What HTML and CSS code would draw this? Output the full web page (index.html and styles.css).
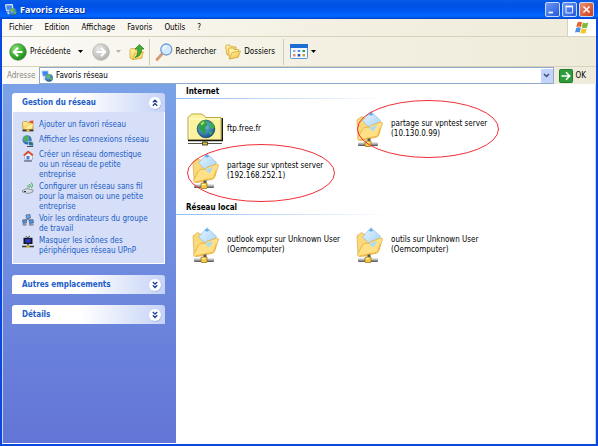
FILE: index.html
```html
<!DOCTYPE html>
<html lang="fr">
<head>
  <meta charset="UTF-8" />
  <meta name="viewport" content="width=device-width, initial-scale=1.0" />
  <title>Favoris réseau</title>
  <link rel="stylesheet" href="styles.css">
</head>
<body>

<!-- Shared icons -->
<svg class="defs" aria-hidden="true">
  <defs>
    <linearGradient id="gFolder" x1="0" y1="0" x2="1" y2="1">
      <stop offset="0" stop-color="#fff3a8" />
      <stop offset="1" stop-color="#f2bd3c" />
    </linearGradient>
    <linearGradient id="gMetal" x1="0" y1="0" x2="0" y2="1">
      <stop offset="0" stop-color="#f4f4f4" />
      <stop offset="0.5" stop-color="#a8acb0" />
      <stop offset="1" stop-color="#44484c" />
    </linearGradient>
    <linearGradient id="gPaper" x1="0" y1="0" x2="1" y2="1">
      <stop offset="0" stop-color="#e6f6ff" />
      <stop offset="1" stop-color="#a4d0f6" />
    </linearGradient>
    <radialGradient id="gGreen" cx="0.35" cy="0.3" r="0.8">
      <stop offset="0" stop-color="#8be07c" />
      <stop offset="0.6" stop-color="#38a92e" />
      <stop offset="1" stop-color="#1c7a1c" />
    </radialGradient>
    <radialGradient id="gGrey" cx="0.35" cy="0.3" r="0.8">
      <stop offset="0" stop-color="#e8e8e6" />
      <stop offset="1" stop-color="#adadab" />
    </radialGradient>
    <radialGradient id="gSea" cx="0.4" cy="0.35" r="0.7">
      <stop offset="0" stop-color="#7cc4f8" />
      <stop offset="1" stop-color="#12508c" />
    </radialGradient>
  </defs>

  <symbol id="i-network" viewBox="0 0 12 12">
    <path d="M0.5 0.800 L7.500 0.5 L8 6.500 L1.5 7z" fill="#8ab4ea" stroke="#dfe9f8" />
    <path d="M1.5 1.800 L6.600 1.5 L6.900 5.300 L2 5.7z" fill="#3f86ea" />
    <path d="M2 8l3-.5v2.500l-2 .5z" fill="#cfd6de" />
    <circle cx="8" cy="7.800" r="3.900" fill="url(#gSea)" />
    <path d="M5.600 5.500q2-2 4-1l-.6 2.400-1.800.6-1.800-.4zM9 8.200l2.200 -.8.4 1.200-1.800 2.200z" fill="#69b94c" />
  </symbol>

  <symbol id="i-netfolder" viewBox="0 0 28 36">
    <path d="M2 10 Q2 8 4 7.500 L6.500 5.500 L9 7 L20 10 V25 L8 29 L3 27z" fill="#fbd978" stroke="#dca848" stroke-width="0.700" />
    <path d="M16 0.700 L25.500 9.500 L17 19 L7.500 10z" fill="url(#gPaper)" stroke="#82b0dc" stroke-width="0.600" />
    <path d="M16 1.300 l2.300 2.200 -2.300 1.200 -2.300-1.200z" fill="#5cb0ee" />
    <path d="M2.500 27.500 L7.500 18 Q8.500 16.500 10.500 16.300 L14 16.300 L16 14.500 L25.500 11 Q28 10.800 27.300 13 L23.500 24.500 Q23 26 21 26.300 L6 29.500 Q2.500 30 2.500 27.500z" fill="#ffe084" stroke="#dba53c" stroke-width="0.700" />
    <path d="M4 28.500 L22 24.800 L25 16 Q26 24 21 26 L6 29.200z" fill="#f2b840" />
    <path d="M14 17 L22.500 13.700 L18.500 20.500z" fill="#a9dcf4" />
    <path d="M12.500 27.500h3v4h-3z" fill="#50565c" />
    <rect x="3" y="31" width="20" height="4" rx="1" fill="url(#gMetal)" />
    <rect x="10" y="30" width="6" height="5.500" rx="0.600" fill="#f9cb3e" stroke="#8c6a14" stroke-width="0.700" />
    <path d="M11 31.500h3" stroke="#fff6c0" />
  </symbol>

  <symbol id="i-ftp" viewBox="0 0 36 36">
    <path d="M1 29V6.500L4.500 3H15L19 6.500H34V29z" fill="#fbf2a0" stroke="#b9a93c" />
    <path d="M2.500 28V8H33" fill="none" stroke="#fffcd6" />
    <path d="M1 29.500H35.300V7" fill="none" stroke="#15150c" stroke-width="1.400" />
    <circle cx="19" cy="18" r="8.800" fill="url(#gSea)" stroke="#123c58" stroke-width="0.700" />
    <path d="M12 13q3-4.500 8-4.200l-1 3 2 1.500-3 3.700 1.500 2.500-2.500 4.500-2-3.500-3-2.500z" fill="#2fa046" />
    <path d="M22 11l4 1 1.500 4-2.500 2.500-2.500-2 .5-2.500zM22 21l4-.5-2.500 4z" fill="#3cae4c" />
    <path d="M13.500 12.500l3-2.500 1 2-3 2.500z" fill="#b9dc58" />
    <path d="M18 29.500v2M1 32.500h34" stroke="#55554c" />
    <rect x="15.500" y="31" width="5" height="3" fill="#d8c22e" stroke="#33332a" stroke-width="0.800" />
  </symbol>

  <symbol id="i-down" viewBox="0 0 5 3"><path d="M0 0h5L2.500 3z" fill="currentColor" /></symbol>

  <symbol id="i-expand" viewBox="0 0 14 14">
    <circle cx="7.500" cy="7.700" r="6" fill="#a7b4dc" />
    <circle cx="7" cy="7" r="6" fill="#fff" />
    <path d="M4.800 4l2.200 2.200L9.200 4M4.800 7.300L7 9.500l2.200-2.200" fill="none" stroke="#1b3c92" stroke-width="1.300" />
  </symbol>

  <symbol id="i-collapse" viewBox="0 0 14 14">
    <circle cx="7.500" cy="7.700" r="6" fill="#a7b4dc" />
    <circle cx="7" cy="7" r="6" fill="#fff" />
    <path d="M4.800 6.400L7 4.200l2.200 2.200M4.800 9.700L7 7.500l2.200 2.200" fill="none" stroke="#1b3c92" stroke-width="1.300" />
  </symbol>
</svg>

<div class="window">
  <header class="titlebar">
    <svg class="icon12"><use href="#i-network" /></svg>
    <h1>Favoris réseau</h1>
    <div class="window-buttons">
      <button type="button" aria-label="Réduire"><svg viewBox="0 0 15 15"><path d="M3 11h5" stroke="#fff" stroke-width="2" /></svg></button>
      <button type="button" aria-label="Agrandir"><svg viewBox="0 0 15 15"><path d="M3.500 4v7.500h7.500V4" fill="none" stroke="#fff" /><path d="M3 4h8.500" stroke="#fff" stroke-width="2" /></svg></button>
      <button type="button" class="close" aria-label="Fermer"><svg viewBox="0 0 15 15"><path d="M4 4l7 7M11 4l-7 7" stroke="#fff" stroke-width="1.700" /></svg></button>
    </div>
  </header>

  <div class="menubar">
    <nav class="menus">
      <button type="button">Fichier</button>
      <button type="button">Edition</button>
      <button type="button">Affichage</button>
      <button type="button">Favoris</button>
      <button type="button">Outils</button>
      <button type="button">?</button>
    </nav>
    <div class="flag">
      <svg viewBox="0 0 14 13">
        <path d="M2.500 1.500Q4.500 0 7 1.200L6 6Q3.500 4.800 1.300 6z" fill="#e8622c" />
        <path d="M7.800 1.600Q10.500 3 13.300 1.600L12 6.500Q9.500 7.700 6.800 6.400z" fill="#7cb83c" />
        <path d="M1.200 6.900Q3.500 5.700 5.800 6.900L4.700 11.500Q2.500 10.300 0 11.500z" fill="#4b8fe0" />
        <path d="M6.600 7.300Q9.200 8.600 11.800 7.400L10.600 12Q8 13.200 5.500 12z" fill="#f6c52c" />
      </svg>
    </div>
  </div>

  <div class="toolbar">
    <button type="button" class="back">
      <svg class="icon18" viewBox="0 0 18 18"><circle cx="9" cy="9" r="8.300" fill="url(#gGreen)" stroke="#2d7a2b" stroke-width="0.600" /><path d="M13.500 9H5.500M9 4.800L4.800 9 9 13.200" fill="none" stroke="#fff" stroke-width="2" /></svg>
      <span>Précédente</span>
      <svg class="arrow"><use href="#i-down" /></svg>
    </button>
    <button type="button" class="forward" aria-label="Suivante">
      <svg class="icon18" viewBox="0 0 18 18"><circle cx="9" cy="9" r="8.300" fill="url(#gGrey)" stroke="#a6a6a4" stroke-width="0.600" /><path d="M4.500 9h8M9 4.800L13.200 9 9 13.200" fill="none" stroke="#fff" stroke-width="2" /></svg>
      <svg class="arrow"><use href="#i-down" /></svg>
    </button>
    <button type="button" class="up" aria-label="Dossier parent">
      <svg class="icon16" viewBox="0 0 16 16">
        <path d="M1 6l1-1.500h3.500l1 1.500L13 7v7l-9 1.500L1 14z" fill="url(#gFolder)" stroke="#d2a02c" stroke-width="0.700" />
        <path d="M4 15.300L5.500 9.500l9-1.500-2 6z" fill="#fbe07c" stroke="#d2a02c" stroke-width="0.600" />
        <path d="M6 13.500Q9.500 11 8.700 5H6L10.500 0.500 15 5h-2.600Q13 12 6 13.500z" fill="#42b035" stroke="#20781c" stroke-width="0.700" />
      </svg>
    </button>
    <button type="button" class="search">
      <svg class="icon18" viewBox="0 0 18 18">
        <path d="M7.500 10.500L2 16.500" stroke="#d79a70" stroke-width="2.800" stroke-linecap="round" />
        <circle cx="11.300" cy="6.500" r="5.500" fill="#d5ebfb" stroke="#6f9fd8" stroke-width="1.300" />
        <path d="M8 6.500Q8.500 3.500 11.500 3.200" fill="none" stroke="#fff" stroke-width="1.300" />
      </svg>
      <span>Rechercher</span>
    </button>
    <button type="button" class="folders">
      <svg class="icon16" viewBox="0 0 16 16">
        <path d="M0.500 2.500L1.500 1H5l1 1.500 5 .5v8H2z" fill="url(#gFolder)" stroke="#d0a030" stroke-width="0.700" />
        <path d="M3.500 5.500L4.500 4H8l1 1.500h4.500v7L4.500 15z" fill="#fff0a0" stroke="#d0a030" stroke-width="0.700" />
        <path d="M4.500 15L7 8.500l8.500-1.500-2.300 6.200z" fill="url(#gFolder)" stroke="#d0a030" stroke-width="0.700" />
      </svg>
      <span>Dossiers</span>
    </button>
    <button type="button" class="views" aria-label="Affichage">
      <svg class="views-icon" viewBox="0 0 18 15">
        <rect x="0.500" y="0.500" width="17" height="14" rx="1" fill="#f6faff" stroke="#5596dc" />
        <path d="M0 0h18v4H0z" fill="#1d6fd4" />
        <path d="M3 6h2.500v2H3z" fill="#a9a2d8" /><path d="M7.700 6h2.500v2H7.700z" fill="#3f8fe4" /><path d="M12.500 6H15v2h-2.500z" fill="#2f9a3a" />
        <path d="M3 10h2.500v2.500H3z" fill="#f08a5c" /><path d="M7.700 10h2.500v2.500H7.700z" fill="#2450a8" /><path d="M12.500 10H15v2.500h-2.500z" fill="#d8a020" />
      </svg>
      <svg class="arrow"><use href="#i-down" /></svg>
    </button>
  </div>

  <form class="addressbar">
    <label for="address">Adresse</label>
    <div class="combo">
      <svg class="icon12"><use href="#i-network" /></svg>
      <input type="text" id="address" value="Favoris réseau" />
      <button type="button" aria-label="Liste des adresses"><svg viewBox="0 0 7 5"><path d="M1 1l2.500 2.500L6 1" fill="none" stroke="#38507c" stroke-width="1.500" /></svg></button>
    </div>
    <button type="button" class="go">
      <svg viewBox="0 0 14 14"><rect x="0.500" y="0.500" width="13" height="13" rx="1" fill="#2f9c3c" stroke="#207a2c" /><path d="M2.500 7h8M7 3.300L10.700 7 7 10.700" fill="none" stroke="#fff" stroke-width="1.600" /></svg>
      <span>OK</span>
    </button>
  </form>

  <div class="content">
    <aside class="sidebar">
      <section class="panel">
        <h2>Gestion du réseau <button type="button" aria-label="Replier"><svg><use href="#i-collapse" /></svg></button></h2>
        <ul class="tasks">
          <li>
            <svg viewBox="0 0 12 12"><path d="M0.500 2.500l1-1H5l1 1h5v7H1z" fill="url(#gFolder)" stroke="#b98a20" stroke-width="0.700" /><path d="M7 1l4.500-.5L11 4 9 3z" fill="#e8502c" /><path d="M6 6l5-2.500-1 5-7 1z" fill="#fff0a0" /><path d="M0.500 10.500h11" stroke="#36383c" stroke-width="1.800" /><path d="M4.500 10.500h3" stroke="#f4c030" stroke-width="2.200" /></svg>
            <a href="#">Ajouter un favori réseau</a>
          </li>
          <li>
            <svg viewBox="0 0 12 12"><circle cx="5" cy="4.800" r="4.600" fill="url(#gSea)" /><path d="M1.500 3Q4-.5 7 1L5.500 3.500 6 5.500 4 7z" fill="#4fb04a" /><path d="M6 6l5 1 .8 4-5-.5z" fill="#2a6f8c" stroke="#c8dce6" stroke-width="0.700" /><path d="M5 11.500h6" stroke="#39525c" /></svg>
            <a href="#">Afficher les connexions réseau</a>
          </li>
          <li>
            <svg viewBox="0 0 12 12"><path d="M2.500 4.500L7 2l3.500 3v4.500L6 11 2.500 9z" fill="#eef2fa" stroke="#8b98b8" stroke-width="0.600" /><path d="M1 5L6 0.500 11.500 4.500 10 6 6.500 3 2.500 6z" fill="#d84c2c" /><path d="M4.500 6h3v3.500h-3z" fill="#4b7fcc" /><path d="M2 11h8" stroke="#5a6170" stroke-width="1.200" /></svg>
            <a href="#">Créer un réseau domestique ou un réseau de petite entreprise</a>
          </li>
          <li>
            <svg viewBox="0 0 12 12"><path d="M0.500 8.500L5 6.500l6 1.500v1.800L6 11.500.5 10z" fill="#d9dce2" stroke="#6f7480" stroke-width="0.700" /><path d="M6 5.500V3M7.500 5.500q1.500-1.500 0-3.500M9.500 6q2-2.500 0-5.500" fill="none" stroke="#3fae3a" /><path d="M2 9.500h2" stroke="#333" /></svg>
            <a href="#">Configurer un réseau sans fil pour la maison ou une petite entreprise</a>
          </li>
          <li>
            <svg viewBox="0 0 12 12"><path d="M4 1l4-.5.5 3.500-4 .5z" fill="#66a9ec" stroke="#4e5c72" stroke-width="0.700" /><path d="M6 4.500L3 8M6 4.500L9 8" stroke="#4e5c72" /><path d="M0.500 6l3.500-.5.5 3.500L1 9.500zM7 6l4-.5.5 3.500-4 .5z" fill="#4f90e0" stroke="#4e5c72" stroke-width="0.700" /><path d="M0.500 10.800h4M7 10.800h4.500" stroke="#6f7788" stroke-width="1.200" /></svg>
            <a href="#">Voir les ordinateurs du groupe de travail</a>
          </li>
          <li>
            <svg viewBox="0 0 12 12"><path d="M3.500 0l2 1.700L8 0" fill="none" stroke="#222" stroke-width="0.800" /><rect x="1.500" y="1.800" width="9" height="6.200" fill="#16171c" /><rect x="3.300" y="3" width="5.400" height="3.800" fill="#2b35c8" /><path d="M6 8v2M0 10.500h12" stroke="#3a3a30" stroke-width="1.300" /><path d="M4.500 9.500h3v2h-3z" fill="#e8c82c" /></svg>
            <a href="#">Masquer les icônes des périphériques réseau UPnP</a>
          </li>
        </ul>
      </section>
      <section class="panel">
        <h2>Autres emplacements <button type="button" aria-label="Déplier"><svg><use href="#i-expand" /></svg></button></h2>
      </section>
      <section class="panel">
        <h2>Détails <button type="button" aria-label="Déplier"><svg><use href="#i-expand" /></svg></button></h2>
      </section>
    </aside>

    <main class="files">
      <h2>Internet</h2>
      <ul class="tiles">
        <li><svg class="ftp"><use href="#i-ftp" /></svg><span>ftp.free.fr</span></li>
        <li>
          <svg><use href="#i-netfolder" /></svg><span>partage sur vpntest server<br>(10.130.0.99)</span>
          <svg class="ring" viewBox="0 0 142 58" preserveAspectRatio="none"><ellipse cx="71" cy="29" rx="70.500" ry="28.500" /></svg>
        </li>
        <li>
          <svg><use href="#i-netfolder" /></svg><span>partage sur vpntest server<br>(192.168.252.1)</span>
          <svg class="ring large" viewBox="0 0 148 58" preserveAspectRatio="none"><ellipse cx="74" cy="29" rx="73.500" ry="28.500" /></svg>
        </li>
      </ul>
      <h2>Réseau local</h2>
      <ul class="tiles">
        <li><svg><use href="#i-netfolder" /></svg><span>outlook expr sur Unknown User<br>(Oemcomputer)</span></li>
        <li><svg><use href="#i-netfolder" /></svg><span>outils sur Unknown User<br>(Oemcomputer)</span></li>
      </ul>
    </main>
  </div>
</div>

</body>
</html>
```

FILE: styles.css
```css
* {
  box-sizing: border-box;
}
body {
  margin: 0;
  font-family: "DejaVu Sans Condensed", Tahoma, "DejaVu Sans", sans-serif;
  font-size: 8px;
  line-height: 10px;
  color: #000;
}
h1, h2, ul {
  margin: 0;
  padding: 0;
}
ul {
  list-style: none;
}
svg {
  display: block;
  flex: none;
}
button, input {
  font: inherit;
  color: inherit;
  margin: 0;
  padding: 0;
  border: none;
  background: none;
}
button {
  display: flex;
  align-items: center;
}
.defs {
  position: absolute;
  width: 0;
  height: 0;
}
.icon12 {
  width: 12px;
  height: 12px;
}
.icon16 {
  width: 16px;
  height: 16px;
}
.icon18 {
  width: 18px;
  height: 18px;
}
.arrow {
  width: 5px;
  height: 3px;
}

.window {
  display: flex;
  flex-direction: column;
  min-height: 100vh;
  padding: 0 2px 2px;
  background: #0a48e0;
}

/* Title bar */
.titlebar {
  display: flex;
  align-items: center;
  gap: 3px;
  height: 19px;
  margin: 0 -2px;
  padding: 0 4px 0 5px;
  background: linear-gradient(#0a5ae8 0%, #0050e6 30%, #0058f4 60%, #0068ff 85%, #0040c8 100%);
}
.titlebar h1 {
  flex: 1;
  font-family: "Open Sans", "Trebuchet MS", sans-serif;
  font-size: 9px;
  font-weight: bold;
  color: #fff;
  text-shadow: 1px 1px #0a2f96;
}
.window-buttons {
  display: flex;
  gap: 2px;
}
.window-buttons button {
  width: 15px;
  height: 15px;
  border: 1px solid #c8d8f8;
  border-radius: 2px;
  background: linear-gradient(135deg, #6f98f4, #2458dc);
}
.window-buttons .close {
  background: linear-gradient(135deg, #f09070, #cc3c18);
}

/* Menus and toolbars */
.menubar, .toolbar, .addressbar {
  background: linear-gradient(90deg, #fbfaf6, #f4f1e4 50%, #eeebda);
}
.menubar {
  display: flex;
  height: 18px;
  border-bottom: 1px solid #d8d2bd;
}
.menus {
  display: flex;
  flex: 1;
  gap: 12px;
  padding-left: 7px;
}
.flag {
  display: flex;
  align-items: center;
  justify-content: center;
  width: 29px;
  background: #fff;
  border-left: 1px solid #d8d2bd;
}
.flag svg {
  width: 14px;
  height: 13px;
}
.toolbar {
  display: flex;
  align-items: center;
  height: 30px;
  padding-left: 7px;
  border-bottom: 1px solid #d8d2bd;
}
.toolbar button {
  gap: 3px;
}
.toolbar .back .arrow {
  margin-left: 4px;
}
.toolbar .forward {
  gap: 6px;
  margin-left: 9px;
  color: #b4b2a8;
}
.toolbar .up {
  height: 26px;
  margin-left: 8px;
  padding-right: 4px;
  border-right: 1px solid #cfcab6;
}
.toolbar .search {
  margin-left: 5px;
}
.toolbar .folders {
  height: 26px;
  margin-left: 9px;
  padding-right: 8px;
  border-right: 1px solid #cfcab6;
}
.toolbar .views {
  margin-left: 6px;
}
.views-icon {
  width: 18px;
  height: 15px;
}
.addressbar {
  display: flex;
  align-items: center;
  height: 17px;
  padding: 0 10px 0 5px;
}
.addressbar label {
  width: 32px;
  color: #8a887c;
}
.combo {
  display: flex;
  flex: 1;
  align-items: center;
  gap: 3px;
  height: 17px;
  padding-left: 1px;
  border: 1px solid #8fa9c8;
  background: #fff;
}
.combo input {
  flex: 1;
  min-width: 0;
  outline: none;
}
.combo button {
  justify-content: center;
  width: 12px;
  height: 14px;
  border-radius: 1px;
  background: #c4d3fa;
}
.combo button svg {
  width: 7px;
  height: 5px;
}
.go {
  gap: 3px;
  margin-left: 5px;
}
.go svg {
  width: 14px;
  height: 14px;
}

/* Content */
.content {
  display: flex;
  flex: 1;
  background: #fff;
  border: 1px solid #c3d3f3;
  border-top: none;
  border-bottom-color: #fff;
}
.sidebar {
  width: 173px;
  padding: 9px 11px 9px 9px;
  background: linear-gradient(#7ba2e7, #6375d6);
}
.panel {
  margin-bottom: 11px;
}
.panel h2 {
  display: flex;
  align-items: center;
  justify-content: space-between;
  height: 19px;
  padding: 1px 3px 0 10px;
  border-radius: 3px 3px 0 0;
  background: linear-gradient(90deg, #fff 45%, #c6d3f7);
  font-size: 8px;
  font-weight: bold;
  color: #215dc6;
}
.panel h2 svg {
  width: 14px;
  height: 14px;
}
.tasks {
  display: flex;
  flex-direction: column;
  gap: 2px;
  padding: 8px 12px 7px 9px;
  border: 1px solid #fff;
  border-top: none;
  background: #d6dff7;
}
.tasks li {
  display: flex;
  gap: 5px;
  min-height: 13px;
}
.tasks svg {
  width: 12px;
  height: 12px;
}
.tasks a {
  color: #215dc6;
  text-decoration: none;
}
.tasks a:hover {
  text-decoration: underline;
}
.files {
  flex: 1;
}
.files h2 {
  height: 15px;
  padding: 3px 0 0 10px;
  font-size: 8px;
  font-weight: bold;
  background: linear-gradient(90deg, #8fbcf4, #fff) left bottom / 212px 1px no-repeat;
}
.tiles {
  display: grid;
  grid-template-columns: repeat(auto-fill, 164px);
  grid-auto-rows: 36px;
  row-gap: 6px;
  padding: 12px 0 11px 11px;
}
.tiles li {
  position: relative;
  display: flex;
  align-items: center;
  gap: 4px;
  white-space: nowrap;
}
.tiles svg {
  width: 36px;
  height: 36px;
}
/* Red circles over the VPN shares */
.tiles .ring {
  position: absolute;
  top: -11px;
  left: 6px;
  width: 142px;
  height: 58px;
  fill: none;
  stroke: #f03038;
}
.tiles .ring.large {
  top: -9px;
  left: 0;
  width: 148px;
}
```
